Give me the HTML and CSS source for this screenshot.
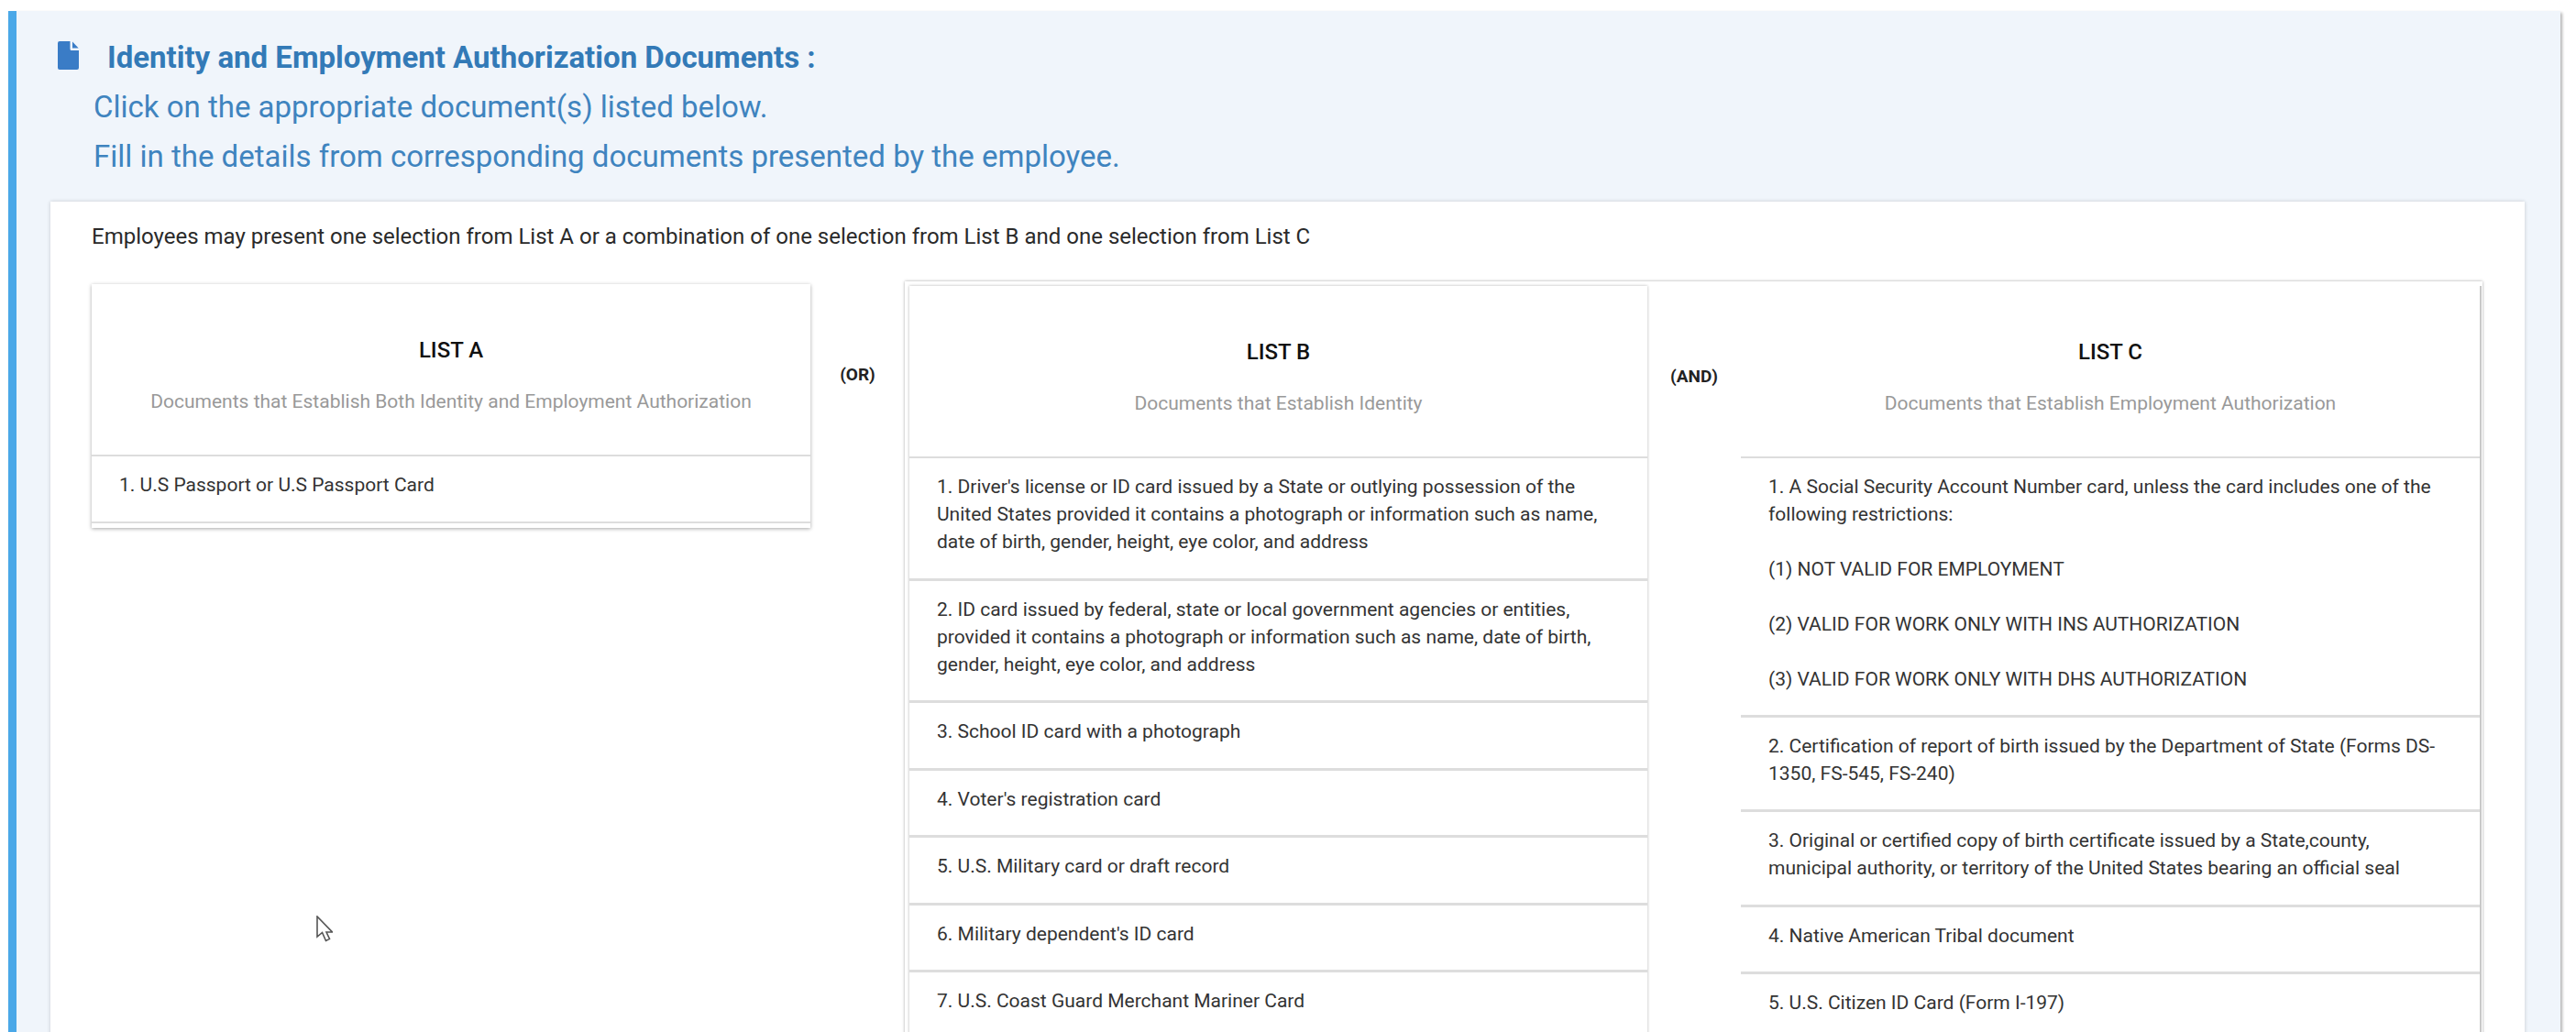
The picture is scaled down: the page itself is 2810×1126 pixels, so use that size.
FILE: index.html
```html
<!DOCTYPE html>
<html lang="en">
<head>
<meta charset="utf-8">
<title>Identity and Employment Authorization Documents</title>
<link rel="stylesheet" href="styles.css">
</head>
<body>
<section class="panel">
  <header class="panel-head">
    <h2 class="panel-title">
      <svg class="doc-icon" viewBox="0 0 23 31" aria-hidden="true"><path d="M2 0H13.5V8.5a1.5 1.5 0 0 0 1.5 1.5H23V29a2 2 0 0 1-2 2H2a2 2 0 0 1-2-2V2a2 2 0 0 1 2-2Z"/><path d="M16 0.5 22.7 7.5H16Z"/></svg>
      Identity and Employment Authorization Documents :
    </h2>
    <p class="panel-line">Click on the appropriate document(s) listed below.</p>
    <p class="panel-line">Fill in the details from corresponding documents presented by the employee.</p>
  </header>
  <div class="card">
    <p class="intro">Employees may present one selection from List A or a combination of one selection from List B and one selection from List C</p>
    <div class="lists">
      <article class="list list-a">
        <header class="list-head">
          <h3 class="list-title">LIST A</h3>
          <p class="list-sub">Documents that Establish Both Identity and Employment Authorization</p>
        </header>
        <ul class="rows">
          <li>1. U.S Passport or U.S Passport Card</li>
        </ul>
      </article>
      <div class="joiner joiner-or">(OR)</div>
      <div class="group">
        <article class="list list-b">
          <header class="list-head">
            <h3 class="list-title">LIST B</h3>
            <p class="list-sub">Documents that Establish Identity</p>
          </header>
          <ul class="rows">
            <li>1. Driver's license or ID card issued by a State or outlying possession of the United States provided it contains a photograph or information such as name, date of birth, gender, height, eye color, and address</li>
            <li>2. ID card issued by federal, state or local government agencies or entities, provided it contains a photograph or information such as name, date of birth, gender, height, eye color, and address</li>
            <li>3. School ID card with a photograph</li>
            <li>4. Voter's registration card</li>
            <li>5. U.S. Military card or draft record</li>
            <li>6. Military dependent's ID card</li>
            <li>7. U.S. Coast Guard Merchant Mariner Card</li>
          </ul>
        </article>
        <div class="joiner joiner-and">(AND)</div>
        <article class="list list-c">
          <header class="list-head">
            <h3 class="list-title">LIST C</h3>
            <p class="list-sub">Documents that Establish Employment Authorization</p>
          </header>
          <ul class="rows">
            <li>1. A Social Security Account Number card, unless the card includes one of the following restrictions:<br><br>(1) NOT VALID FOR EMPLOYMENT<br><br>(2) VALID FOR WORK ONLY WITH INS AUTHORIZATION<br><br>(3) VALID FOR WORK ONLY WITH DHS AUTHORIZATION</li>
            <li>2. Certification of report of birth issued by the Department of State (Forms DS-1350, FS-545, FS-240)</li>
            <li>3. Original or certified copy of birth certificate issued by a State,county, municipal authority, or territory of the United States bearing an official seal</li>
            <li>4. Native American Tribal document</li>
            <li>5. U.S. Citizen ID Card (Form I-197)</li>
          </ul>
        </article>
      </div>
    </div>
  </div>
</section>
<svg class="cursor" viewBox="0 0 18 29" aria-hidden="true"><path d="M1 1V23L6.5 18.5 10.5 27.5 14.5 25.5 11 18H17.5Z"/></svg>
</body>
</html>
```

FILE: styles.css
```css
* { box-sizing: border-box; }
html, body { height: 100%; margin: 0; overflow: hidden; background: #fff; }
body { font-family: Roboto, "Liberation Sans", sans-serif; color: #222; padding: 12px 17px 0 9px; }
h2, h3, p, ul { margin: 0; padding: 0; }
ul { list-style: none; }

.panel { height: 1114px; overflow: hidden; background: #f0f5fb; border-left: 9px solid #4aa8e8; box-shadow: 2px 2px 3px rgba(0,0,0,.3); }
.panel-head { padding: 24px 0 22px 84px; color: #3f84bf; }
.panel-title { position: relative; margin-left: 15px; font-size: 33px; line-height: 54px; font-weight: 700; color: #337ab7; }
.doc-icon { position: absolute; left: -54px; top: 9px; width: 23px; height: 31px; fill: #3a7cc6; }
.panel-line { font-size: 33px; line-height: 54px; }

.card { margin: 0 39px 0 37px; padding: 23px 46px 0 45px; height: 980px; overflow: hidden; background: #fff; box-shadow: 0 0 4px rgba(0,0,0,.18); }
.intro { font-size: 24px; line-height: 30px; color: #2a2a2a; }
.lists { display: flex; align-items: flex-start; margin-top: 34px; }

.list { background: #fff; }
.list-a { width: 784px; flex: none; margin-top: 3px; padding-bottom: 5px; box-shadow: 0 1px 4px rgba(0,0,0,.35); }
.group { display: flex; flex: 1; padding: 5px 3px 0 5px; box-shadow: 0 0 3px rgba(0,0,0,.35); }
.list-b { width: 805px; flex: none; box-shadow: 0 0 3px rgba(0,0,0,.3); }
.list-c { flex: 1; box-shadow: 2px 0 0 #c8c8c8; }

.list-head { height: 188px; padding: 57px 20px 0; text-align: center; border-bottom: 2px solid #ddd; }
.list-title { font-size: 24px; line-height: 30px; font-weight: 500; color: #111; }
.list-sub { margin-top: 26px; font-size: 21px; line-height: 30px; color: #999; }

.rows li { padding: 16px 30px 24.5px; font-size: 21px; line-height: 30px; color: #333; border-bottom: 3px solid #ddd; }
.list-a .rows li { border-bottom-width: 2px; }
.list-c .rows li:first-child { padding-bottom: 23.5px; }

.joiner { flex: none; text-align: center; font-size: 19px; line-height: 24px; font-weight: 700; color: #222; }
.joiner-or { width: 103px; padding-top: 90px; }
.joiner-and { width: 102px; padding-top: 87px; }

.cursor { position: absolute; left: 345px; top: 999px; width: 18px; height: 29px; fill: #fff; stroke: #555; stroke-width: 1.6; }
```
